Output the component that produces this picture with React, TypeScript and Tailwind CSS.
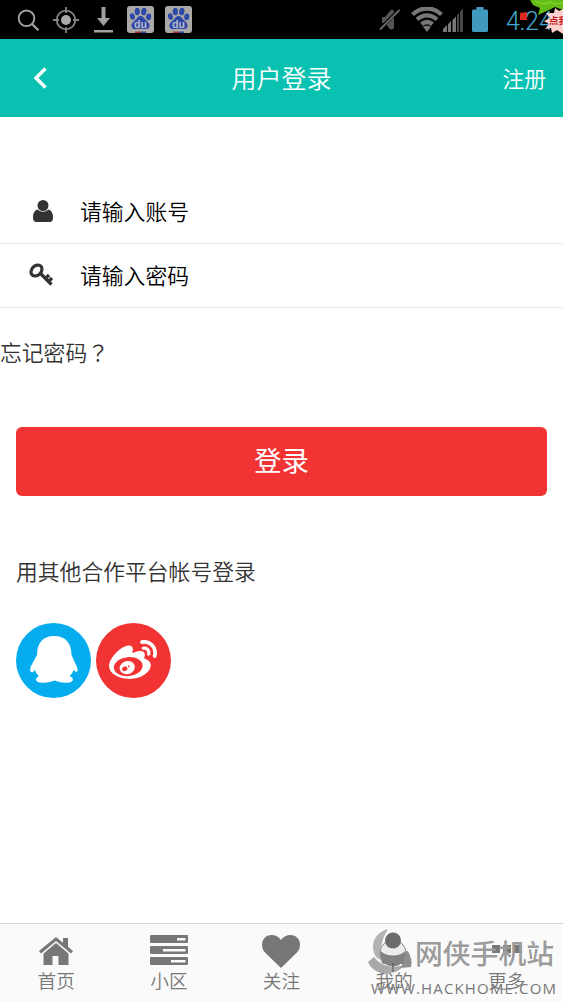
import type { ReactNode } from 'react';
import { FaWeibo } from 'react-icons/fa';

function BaiduIcon() {
  return (
    <svg width="27" height="27" viewBox="0 0 27 27">
      <rect width="27" height="27" rx="3" fill="#aaa9a8" />
      <g fill="#2e48a8">
        <ellipse cx="5.4" cy="10.5" rx="2.5" ry="3.3" transform="rotate(-12 5.4 10.5)" />
        <ellipse cx="10.3" cy="5.5" rx="2.6" ry="3.8" />
        <ellipse cx="16.8" cy="5.5" rx="2.6" ry="3.8" transform="rotate(10 16.8 5.5)" />
        <ellipse cx="21.7" cy="10.8" rx="2.5" ry="3.3" transform="rotate(8 21.7 10.8)" />
        <path d="M13.5 10c-2.5 0-3.2 2.2-5.2 4.1C5.6 16.5 4 18 4.5 20.4c.6 2.7 3 3 5.6 2.6 2.6-.4 4.4-.4 7 0 2.7.4 5-.1 5.5-2.7.4-2.4-1.5-4-3.9-6.3C16.9 12.1 16 10 13.5 10z" />
      </g>
      <text x="13.5" y="21.5" textAnchor="middle" fontSize="10.5" fontWeight="700" fill="#b9bcc8" fontFamily="Liberation Sans, sans-serif">
        du
      </text>
      <path d="M8 25.5h6V27H8z" fill="#a33" />
      <path d="M14 25.5h5V27h-5z" fill="#2e48a8" />
    </svg>
  );
}

function StatusBar() {
  return (
    <div className="relative flex h-[39px] shrink-0 items-center overflow-hidden bg-black pl-[17px]">
      <svg className="mr-[14px]" width="22" height="22" viewBox="0 0 22 22" fill="none" stroke="#a3a3a3" strokeWidth="1.9">
        <circle cx="9.5" cy="9.3" r="7.8" />
        <path d="m15 15 6.3 6.2" strokeWidth="2.2" />
      </svg>
      <svg className="mr-[15px]" width="26" height="26" viewBox="0 0 26 26" fill="none" stroke="#858585" strokeWidth="1.8">
        <circle cx="13" cy="13" r="9.3" />
        <circle cx="13" cy="13" r="5" fill="#aaa" stroke="none" />
        <path d="M13 0v6M13 20v6M0 13h6M20 13h6" />
      </svg>
      <svg className="mr-[14px]" width="19" height="26" viewBox="0 0 19 26" fill="#a0a0a0">
        <path d="M7.5 0h4v11H16l-6.5 8L3 11h4.5zM0 23h19v2.4H0z" />
      </svg>
      <BaiduIcon />
      <div className="w-[11px]" />
      <BaiduIcon />
      <svg className="ml-[187px]" width="22" height="22" viewBox="0 0 22 22">
        <path d="M3 8h3l6-7c3-1 3 2 3 4v12c0 4-2 4-4 3l-5-6H3z" fill="#555" />
        <path d="M1 20 20 1" stroke="#000" strokeWidth="3.5" />
        <path d="M1 20.5 20.5 1" stroke="#666" strokeWidth="2" />
      </svg>
      <svg className="ml-[10px]" width="32" height="25" viewBox="0 0 32 25" fill="none" stroke="#777" strokeWidth="4.4">
        <path d="M1.5 7.5C10-.5 22-.5 30.5 7.5" />
        <path d="M6 12.5c6-5.5 14-5.5 20 0" />
        <path d="M10.5 17.2c3.4-2.8 7.6-2.8 11 0" />
        <path d="M16 25l-4-5c2.3-1.8 5.7-1.8 8 0z" fill="#777" stroke="none" />
      </svg>
      <svg width="20" height="25" viewBox="0 0 20 25">
        <path d="M0 25v-3l4-4v7zM5 25v-8l3-3v11zM9.5 25V13l3.5-3.5V25z" fill="#777" />
        <path d="M14 25V8l2-2v19zM17 25V5l3-4v24z" fill="#484848" />
      </svg>
      <svg className="ml-[9px]" width="16" height="25" viewBox="0 0 16 25" fill="#409abf">
        <path d="M4.5 0h7v2.5h3Q16 2.5 16 4v19.5q0 1.5-1.5 1.5h-13Q0 25 0 23.5V4q0-1.5 1.5-1.5h3z" />
      </svg>
      <span className="mt-[3px] ml-[18px] whitespace-nowrap font-[Roboto,sans-serif] text-[25px] leading-none font-light text-[#45a9d4]">4:24</span>
      {/* floating promo sticker, cut off by the right screen edge */}
      <svg className="absolute top-0 right-0" width="45" height="36" viewBox="0 0 45 36">
        <path d="m2 13 7-1v8H2z" fill="#df2922" />
        <path d="M12 0h33v10l-8-3-6 3-11 5 2-7-7-3z" fill="#63bc18" />
        <path d="M17 1q7 5 14 1 6 3 14 1" stroke="#82d026" strokeWidth="1.5" fill="none" />
        <path d="m45 9-4 2-4-3-1 5-8 0 4 5-6 3 5 3-4 5 6-1 1 5 5-3 6 4z" fill="#fbd0ce" />
        <text x="31" y="23.5" fontSize="9.5" fontWeight="700" fill="#c51a1b" fontFamily="Noto Sans CJK SC, sans-serif">
          点我
        </text>
      </svg>
    </div>
  );
}

function Field({ icon, label }: { icon: ReactNode; label: string }) {
  return (
    <label className="flex h-16 items-center border-b-[1.5px] border-[#e9e9e9] pb-[2px] pl-[29px]">
      <span className="flex w-[51px]">{icon}</span>
      <span className="text-[21.8px] leading-none font-[350] text-black">{label}</span>
    </label>
  );
}

function TabItem({ icon, label }: { icon: ReactNode; label: string }) {
  return (
    <div className="flex flex-1 flex-col items-center pt-[10px]">
      <span className="flex h-[34px] items-center">{icon}</span>
      <span className="mt-[2px] text-[18.7px] leading-[19px] font-[350]">{label}</span>
    </div>
  );
}

function Watermark() {
  return (
    <div className="absolute top-[2px] left-[365px] h-[76px] w-[198px]">
      <svg className="absolute top-0 left-0" width="48" height="50" viewBox="0 0 48 50">
        <path d="M23 3C8 7 5 21 11 31l7 5C14 26 16 14 23 3z" fill="#b2b2b2" />
        <path d="M3 36l6-5c6 8 16 12 30 8-6 9-17 9-22 8C10 46 5 41 3 36z" fill="#a9a9a9" />
        <path d="M38 26l5-1q5 9 3 16l-11 1q6-7 3-16z" fill="#8e8e8e" />
        <circle cx="28" cy="27" r="13" fill="#ececec" stroke="#8b8b8b" />
        <path d="M15.5 25c7 6 18 6 25 0 1 9-4 15-12.5 15s-13.500-6-12.500-15z" fill="#828282" />
        <circle cx="28" cy="14.5" r="8" fill="#6c6c6c" />
        <path d="M28 37v9" stroke="#555" />
      </svg>
      <span className="absolute top-[8px] left-[50px] whitespace-nowrap text-[27.8px] leading-[36px] font-medium text-[#9b9b9b]">网侠手机站</span>
      <span className="absolute top-[53px] left-[6px] whitespace-nowrap font-['Open_Sans',sans-serif] text-[15px] leading-[18px] tracking-[1.15px] text-[#777]">WWW.HACKHOME.COM</span>
    </div>
  );
}

function TabBar() {
  return (
    <nav className="relative flex h-[79px] shrink-0 overflow-hidden border-t border-[#d8d8d8] bg-[#fafafa] text-[#777]">
      <TabItem
        label="首页"
        icon={
          <svg width="34" height="28" viewBox="0 0 34 28" fill="currentColor">
            <path d="M17 0 0 14l2 2.4L17 4l15 12.4 2-2.4-5-4.2V1h-5v4.8z" />
            <path d="M17 6 4.5 16.5V28h9v-9h6v9h10V16.5z" />
          </svg>
        }
      />
      <TabItem
        label="小区"
        icon={
          <svg className="-mt-[3px]" width="38" height="30" viewBox="0 0 38 30">
            <g fill="currentColor">
              <rect width="38" height="8" rx="1" />
              <rect y="11" width="38" height="8" rx="1" />
              <rect y="22" width="38" height="8" rx="1" />
            </g>
            <path d="M27 3h8.5v2.5H27zM13 14h22.5v2.5H13zM21 25h14.5v2.5H21z" fill="#fafafa" />
          </svg>
        }
      />
      <TabItem
        label="关注"
        icon={
          <svg width="38" height="33" viewBox="0 0 38 33" fill="currentColor">
            <path d="M19 33 3 17.5C-1 13.5-1 6 3 2.5 8-1.5 15-.5 19 5c4-5.5 11-6.5 16-2.5 4 3.5 4 11 0 15z" />
          </svg>
        }
      />
      <TabItem
        label="我的"
        icon={
          <svg width="26" height="30" viewBox="0 0 26 30" fill="currentColor">
            <circle cx="13" cy="8" r="7" />
            <path d="M4 13q9 8 18 0 4 3 4 10 0 5-4 5H4q-4 0-4-5 0-7 4-10z" />
          </svg>
        }
      />
      <TabItem
        label="更多"
        icon={
          <svg className="-mt-[4px]" width="30" height="8" viewBox="0 0 30 8" fill="currentColor">
            <path d="M0 0h8v8H0zM11 0h8v8h-8zM22 0h8v8h-8z" />
          </svg>
        }
      />
      <Watermark />
    </nav>
  );
}

export default function App() {
  return (
    <div className="flex h-[1002px] w-[563px] flex-col overflow-hidden bg-white font-['Noto_Sans_CJK_SC',sans-serif] text-[#333]">
      <StatusBar />
      <header className="grid h-[78px] shrink-0 grid-cols-[1fr_auto_1fr] items-center bg-[#08c1b1] text-white">
        <div className="pl-[34px]">
          <svg width="13" height="22" viewBox="0 0 13 22" fill="none" stroke="currentColor" strokeWidth="3.4">
            <path d="M11.5 1.5 2 11l9.5 9.5" />
          </svg>
        </div>
        <h1 className="pb-[2px] text-[25px] leading-none font-[350]">用户登录</h1>
        <div className="pr-[17px] pb-px text-right text-[21.8px] leading-none font-[350]">注册</div>
      </header>

      <main className="flex flex-1 flex-col pt-[63px]">
        <Field
          label="请输入账号"
          icon={
            <svg className="ml-1" width="20" height="22" viewBox="0 0 20 22" fill="#333">
              <circle cx="10" cy="5.5" r="5.5" />
              <path d="M4.5 9.5q5.5 4.5 11 0Q20 11 20 17.5q0 4.5-3.5 4.5h-13Q0 22 0 17.5 0 11 4.5 9.5z" />
            </svg>
          }
        />
        <Field
          label="请输入密码"
          icon={
            <svg width="25" height="24" viewBox="0 0 25 24" fill="none" stroke="#333" strokeWidth="3.2">
              <ellipse cx="7.5" cy="7.5" rx="6.2" ry="4.7" transform="rotate(-45 7.5 7.5)" />
              <path d="m11 10 11.5 11.5M16.5 15.5l3.5-3.5M19.5 18.5l3.5-3.5" />
            </svg>
          }
        />
        <a className="mt-[32px] text-[21.8px] leading-[24px] font-[350]">
          忘记密码
          <span className="font-['Noto_Sans_CJK_TC',sans-serif]" lang="zh-TW">
            ？
          </span>
        </a>
        <button className="mx-4 mt-[63px] h-[69px] rounded-md bg-[#f13334] pb-[3px] text-[27.5px] leading-none text-white">登录</button>
        <p className="mt-[63px] ml-4 text-[21.8px] leading-[24px] font-[350]">用其他合作平台帐号登录</p>
        <div className="mt-[40px] ml-4 flex gap-[4.5px]">
          <div className="size-[75px] rounded-full bg-[#05adef]">
            <svg width="75" height="75" viewBox="0 0 75 75" fill="#fff">
              <path d="M38 13C26 13 21 21 21 32L15 43c-2 5 0 9 4 4 1 3 2 4 4 6-4 2-4 6 1 6.5 6 1 11-.5 14.5-2 4 1.5 9 3 15 2 4.5-1 4.5-5 0-6.5 2-2 3-3 4-6 4 4 5 1 3-4l-5-11c0-11-5-19-17.500-19z" />
            </svg>
          </div>
          <div className="flex size-[75px] items-center justify-center rounded-full bg-[#f13334] text-white">
            <FaWeibo size={48} />
          </div>
        </div>
      </main>
      <TabBar />
    </div>
  );
}
